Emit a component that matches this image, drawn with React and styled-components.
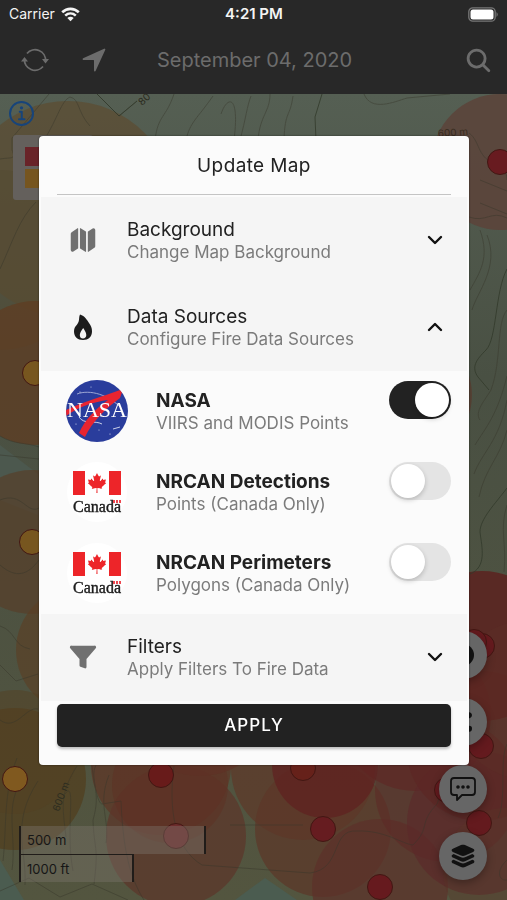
import React, { useState } from "react";
import styled, { createGlobalStyle } from "styled-components";
import {
  IoMap,
  IoFunnel,
  IoNavigate,
  IoSearch,
  IoInformationCircleOutline,
  IoLayers,
  IoShareSocial,
} from "react-icons/io5";
import { FaCanadianMapleLeaf } from "react-icons/fa";

const GlobalStyle = createGlobalStyle`
  * {
    box-sizing: border-box;
  }
  body {
    margin: 0;
    font-family: Inter, "Liberation Sans", sans-serif;
    background: #282828;
  }
  button {
    font-family: inherit;
    border: 0;
    padding: 0;
    background: none;
    cursor: pointer;
  }
  h1, h2, h3, p {
    margin: 0;
    font-weight: 400;
  }
`;

const Page = styled.div`
  display: flex;
  flex-direction: column;
  min-height: 100vh;
`;

const Header = styled.header`
  background: #282828;
`;

const StatusBar = styled.div`
  display: grid;
  grid-template-columns: 1fr auto 1fr;
  align-items: center;
  height: 28px;
  padding: 0 8px 0 9px;
  color: #f4f4f4;
  font-size: 14px;
  line-height: 20px;
`;

const Carrier = styled.div`
  display: flex;
  align-items: center;
  gap: 6px;
`;

const Clock = styled.div`
  font-size: 15px;
  font-weight: 600;
`;

const Battery = styled.svg`
  justify-self: end;
`;

const Toolbar = styled.div`
  display: grid;
  grid-template-columns: 1fr auto 1fr;
  align-items: center;
  height: 66px;
  padding: 0 14px 2px 16px;
  color: #6c6c6c;
`;

const ToolGroup = styled.div`
  display: flex;
  gap: 20px;
  justify-content: ${(props) => (props.$end ? "flex-end" : "flex-start")};
`;

const ToolButton = styled.button`
  display: flex;
  align-items: center;
  justify-content: center;
  min-width: 30px;
  height: 44px;
  padding: 0 ${(props) => props.$pad || 0}px;
  color: inherit;
`;

const Title = styled.h1`
  text-align: center;
  font-size: 20px;
  line-height: 28px;
`;

const MapArea = styled.main`
  position: relative;
  flex: 1;
  overflow: hidden;
  background: #555b4d;
`;

const MapCanvas = styled.svg`
  position: absolute;
  inset: 0;
  width: 100%;
  height: 100%;
`;

const InfoButton = styled.button`
  position: absolute;
  top: 4px;
  left: 6px;
  display: flex;
  color: #17447a;
`;

const Legend = styled.div`
  position: absolute;
  top: 41px;
  left: 13px;
  display: grid;
  gap: 3px;
  width: 80px;
  padding: 12px;
  border-radius: 3px;
  background: #64605c;
`;

const Swatch = styled.div`
  width: 20px;
  height: 19px;
  background: ${(props) => props.$color};
`;

const ScaleBox = styled.div`
  position: absolute;
  left: 19px;
  bottom: 18px;
  color: #161616;
  font-size: 13px;
`;

const Scale = styled.div`
  display: flex;
  align-items: center;
  width: ${(props) => props.$width}px;
  height: 28px;
  padding-left: 6px;
  border: solid #201c19;
  border-width: ${(props) => (props.$last ? "1px 2px 0" : "0 2px")};
  background: rgba(125, 117, 110, 0.4);
`;

const MapButtons = styled.div`
  position: absolute;
  right: 20px;
  bottom: 20px;
  display: grid;
  gap: 19px;
`;

const RoundButton = styled.button`
  display: flex;
  align-items: center;
  justify-content: center;
  width: 48px;
  height: 48px;
  border-radius: 50%;
  color: #111;
  background: #666;
  box-shadow: 0 3px 8px rgba(0, 0, 0, 0.3);
`;

const Overlay = styled.div`
  position: fixed;
  inset: 0;
  display: flex;
  align-items: center;
  justify-content: center;
  padding: 0 38px 0 39px;
`;

const Dialog = styled.section`
  width: 100%;
  max-width: 520px;
  border-radius: 4px;
  color: #222;
  background: #fbfbfb;
  box-shadow: 0 0 2px rgba(0, 0, 0, 0.6);
`;

const DialogHeader = styled.div`
  padding: 0 18px 2px;

  h2 {
    height: 59px;
    padding-top: 2px;
    border-bottom: 1px solid #c4c4c4;
    text-align: center;
    font-size: 19px;
    letter-spacing: 0.02em;
    line-height: 56px;
  }
`;

const SectionWrap = styled.div`
  padding: 0 2px;
`;

const SectionButton = styled.button`
  display: flex;
  align-items: center;
  width: 100%;
  height: 87px;
  padding: 0 23px 0 26px;
  text-align: left;
  color: #222;
  background: #f5f5f5;
`;

const SectionIcon = styled.span`
  display: flex;
  justify-content: center;
  width: 32px;
  margin-right: 28px;
  color: ${(props) => (props.$active ? "#1c1c1c" : "#707070")};
`;

const Texts = styled.span`
  flex: 1;
  display: grid;
  gap: 1px;
`;

const Name = styled.span`
  color: #222;
  font-size: 19px;
  font-weight: ${(props) => (props.$bold ? 700 : 400)};
  line-height: 22px;
`;

const Note = styled.span`
  color: #7b7b7b;
  font-size: 17px;
  line-height: 20px;
`;

const SourceRow = styled.label`
  display: flex;
  align-items: center;
  height: 81px;
  padding: 0 18px 0 27px;
  cursor: pointer;
`;

const Logo = styled.svg`
  flex: none;
  margin-right: 28px;
`;

const Switch = styled.input`
  appearance: none;
  align-self: flex-start;
  flex: none;
  display: flex;
  width: 62px;
  height: 38px;
  margin: 10px 0 0;
  padding: 2px;
  border-radius: 19px;
  background: #e4e4e4;
  cursor: pointer;

  &::before {
    content: "";
    width: 34px;
    height: 34px;
    border-radius: 50%;
    background: #fff;
    box-shadow: 0 2px 5px rgba(0, 0, 0, 0.2);
  }

  &:checked {
    justify-content: flex-end;
    background: #222;
  }
`;

const DialogFooter = styled.div`
  padding: 3px 18px 18px;
`;

const ApplyButton = styled.button`
  width: 100%;
  height: 43px;
  border-radius: 5px;
  color: #fff;
  background: #222;
  font-size: 17px;
  font-weight: 500;
  letter-spacing: 0.06em;
  box-shadow: 0 2px 3px rgba(0, 0, 0, 0.25);
`;

const DOTS = [
  [35, 373, "#77561f"],
  [32, 542, "#77561f"],
  [15, 779, "#80591f"],
  [500, 162, "#681b20"],
  [161, 775, "#681b1a"],
  [303, 768, "#66211a"],
  [323, 829, "#661c20"],
  [176, 836, "#6d2c2c"],
  [380, 887, "#661a1e"],
  [479, 823, "#641a1e"],
  [481, 746, "#641a1e"],
  [482, 646, "#641a1e"],
  [474, 642, "#641a1e"],
  [447, 790, "#641a1e"],
];

const HALOS = [
  [68, 209, 108, "#5c4c30", 0.7],
  [0, 260, 90, "#544a32", 0.5],
  [35, 373, 72, "#5f3c22", 0.75],
  [32, 542, 72, "#573e29", 0.7],
  [80, 650, 64, "#5b3f25", 0.65],
  [15, 779, 71, "#514020", 0.8],
  [15, 752, 62, "#543f22", 0.5],
  [500, 162, 68, "#5c4339", 0.85],
  [161, 765, 70, "#5c3828", 0.8],
  [176, 836, 70, "#5d3529", 0.7],
  [170, 785, 58, "#5f2c20", 0.4],
  [303, 768, 72, "#5c3b2a", 0.8],
  [323, 829, 68, "#5d3628", 0.7],
  [200, 700, 76, "#5f3024", 0.6],
  [325, 765, 53, "#602020", 0.7],
  [380, 887, 68, "#5d3029", 0.7],
  [415, 715, 76, "#602422", 0.65],
  [447, 790, 72, "#5d2a26", 0.6],
  [479, 823, 72, "#5b282a", 0.6],
  [481, 746, 75, "#5c2423", 0.55],
  [482, 646, 75, "#5c1f1d", 0.8],
  [505, 870, 62, "#5a3528", 0.4],
  [530, 700, 80, "#5b2e26", 0.5],
  [410, 395, 62, "#5b3529", 0.6],
];

const CONTOURS = [
  "M49 94L12 138V150C16 160 12 157 0 159",
  "M44 140C58 118 61 101 70 97C80 99 77 112 90 126",
  "M97 94L119 116L137 101",
  "M174 94C166 118 158 115 155 140M213 96C197 119 190 122 186 140M221 114C227 96 240 93 234 140M240 140C246 118 247 106 251 96",
  "M270 94C270 112 260 115 258 140M293 96C290 118 285 110 284 140",
  "M364 94C371 112 394 102 407 98L450 94",
  "M469 133C480 141 477 156 493 163C500 170 507 168 507 180",
  "M480 180L507 191M480 203L507 214M469 217C486 223 491 210 507 218",
  "M480 230C490 258 480 272 470 290M487 235C500 267 477 292 472 310",
  "M507 310C496 323 502 360 491 390C485 400 474 412 480 420",
  "M507 376C497 416 486 427 475 445M507 400C499 442 482 452 474 474M507 430C500 458 485 468 479 497",
  "M507 505C499 530 507 543 504 572",
  "M0 269C13 241 19 219 36 202",
  "M0 436C15 445 25 442 39 447M0 455L39 459M0 500C22 491 27 515 39 508",
  "M0 565C16 579 28 575 39 560",
  "M0 626C16 631 13 646 30 649M0 665L16 681L38 674",
  "M0 720C16 732 26 706 38 709",
  "M3 861C7 825 3 793 17 758M12 870C17 837 3 802 24 779M25 885C27 850 10 824 38 781",
  "M65 794C77 778 65 830 73 871M77 766C60 793 62 804 66 837",
  "M96 765C89 780 102 790 93 820C94 850 99 845 94 884M109 775C97 805 110 819 106 843",
  "M92 766C94 785 98 804 102 804L121 801C123 850 130 878 144 900",
  "M174 766C168 810 175 849 202 865L310 873C343 869 330 829 357 831C385 830 402 844 413 845C431 827 418 824 437 804C445 781 455 762 469 750",
  "M230 825L303 825",
  "M0 891L29 878L60 897L92 884L128 900",
  "M507 744C499 760 507 800 498 818M507 860C496 870 498 881 507 880",
];

function FireMap() {
  return (
    <MapCanvas viewBox="0 94 507 806" preserveAspectRatio="xMidYMid slice" aria-hidden="true">
      <defs>
        <linearGradient id="land" x1="0" y1="0" x2="0" y2="1">
          <stop offset="0" stopColor="#555f53" />
          <stop offset=".35" stopColor="#495043" />
          <stop offset="1" stopColor="#53553f" />
        </linearGradient>
      </defs>
      <rect y="94" width="507" height="806" fill="url(#land)" />
      <path d="M0 445L38 474V515L0 500Z" fill="#4c584e" />
      <path d="M0 860L24 900H0ZM235 900L265 878L297 900H235Z" fill="#4b5c50" />
      {HALOS.map(([x, y, r, color, opacity], i) => (
        <circle key={i} cx={x} cy={y} r={r} fill={color} opacity={opacity} />
      ))}
      <g fill="none" stroke="#37362a" strokeWidth="1" opacity=".45">
        {CONTOURS.map((d) => (
          <path key={d} d={d} />
        ))}
      </g>
      <path
        d="M322 94L315 117L316 140M97 94L119 116L137 101M507 269C495 291 497 339 486 350C476 360 471 367 478 377L489 390M507 488C495 504 480 519 480 532C482 548 487 567 470 574"
        fill="none"
        stroke="#323a2a"
        opacity=".8"
      />
      <g fill="#2c2c20" fontSize="10">
        <text transform="translate(142 106) rotate(-42)">80</text>
        <text transform="translate(438 137) rotate(-4)" fill="#382c20">
          600 m
        </text>
        <text transform="translate(59 812) rotate(-70)">600 m</text>
      </g>
      {DOTS.map(([x, y, color]) => (
        <circle key={`${x}-${y}`} cx={x} cy={y} r="12.5" fill={color} stroke="#421713" />
      ))}
    </MapCanvas>
  );
}

function NasaLogo() {
  return (
    <Logo width="62" height="62" viewBox="0 0 62 62" role="img" aria-label="NASA">
      <clipPath id="globe">
        <circle cx="31" cy="31" r="31" />
      </clipPath>
      <g clipPath="url(#globe)">
        <rect width="62" height="62" fill="#2a3d9c" />
        <path d="M11 14C24 9 43 15 55 28" fill="none" stroke="#a9b2da" strokeWidth=".9" />
        <path d="M13 37C18 45 29 40 36 44M47 49L54 47" fill="none" stroke="#dbe0f1" strokeWidth=".9" />
        <path d="M0 30C16 22 36 17 57 9L54 18C40 28 26 42 19 57L13 53C19 40 28 30 42 20C28 22 14 26 0 36Z" fill="#e82430" />
      </g>
      <g fill="#dce2f4">
        <circle cx="14" cy="12" r=".6" />
        <circle cx="25" cy="7" r=".5" />
        <circle cx="10" cy="44" r=".6" />
        <circle cx="44" cy="54" r=".6" />
        <circle cx="33" cy="50" r=".5" />
      </g>
      <text x="31" y="37" textAnchor="middle" fill="#fff" fontFamily="Liberation Serif, serif" fontSize="22">
        NASA
      </text>
    </Logo>
  );
}

function CanadaLogo() {
  return (
    <Logo width="62" height="62" viewBox="0 0 62 62" role="img" aria-label="Canada">
      <circle cx="31" cy="31" r="30" fill="#fff" />
      <path d="M7 10H19V34H7ZM43 10H55V34H43Z" fill="#ed2529" />
      <FaCanadianMapleLeaf x="21" y="12" size={20} color="#ed2529" />
      <text x="7" y="51" fontFamily="Liberation Serif, serif" fontSize="16" fill="#1d1d1d" stroke="#1d1d1d" strokeWidth=".4">
        Canada
      </text>
      <path d="M47 39H49V42H47ZM53 39H55V42H53ZM50 39H52V42H50Z" fill="#ed4850" />
    </Logo>
  );
}

function FlameIcon() {
  return (
    <svg width="20" height="27" viewBox="0 0 20 27" aria-hidden="true">
      <path
        fill="currentColor"
        fillRule="evenodd"
        d="M7 .5c5 1.500 7 5.500 9 8.500 2 3 3 5 3 8.500C19 22.500 15.500 26 10 26S1 22.500 1 17.500C1 12 5 11 5.800 7c.5-2.500.2-4.500 1.200-6.500ZM10.200 14c-1.200 2-3.400 4.500-3.400 7s1.300 3.500 3.200 3.500 3.300-1.300 3.300-3.500c0-3-2-5-3.100-7Z"
      />
    </svg>
  );
}

function Chevron({ open }) {
  return (
    <svg width="18" height="12" viewBox="0 0 18 12" fill="none" stroke="#111" strokeWidth="2.4" aria-hidden="true">
      <path d={open ? "M3 9L9 3L15 9" : "M3 3L9 9L15 3"} strokeLinecap="round" strokeLinejoin="round" />
    </svg>
  );
}

function Section({ icon, name, note, open, onToggle }) {
  return (
    <SectionWrap>
      <SectionButton type="button" aria-expanded={open} onClick={onToggle}>
        <SectionIcon $active={open}>{icon}</SectionIcon>
        <Texts>
          <Name>{name}</Name>
          <Note>{note}</Note>
        </Texts>
        <Chevron open={open} />
      </SectionButton>
    </SectionWrap>
  );
}

const SOURCES = [
  { id: "nasa", name: "NASA", note: "VIIRS and MODIS Points", logo: <NasaLogo /> },
  { id: "detections", name: "NRCAN Detections", note: "Points (Canada Only)", logo: <CanadaLogo /> },
  { id: "perimeters", name: "NRCAN Perimeters", note: "Polygons (Canada Only)", logo: <CanadaLogo /> },
];

function UpdateMap() {
  const [open, setOpen] = useState("sources");
  const [enabled, setEnabled] = useState({ nasa: true, detections: false, perimeters: false });

  const toggleSection = (id) => setOpen(open === id ? "" : id);
  const toggleSource = (id) => setEnabled({ ...enabled, [id]: !enabled[id] });

  return (
    <Dialog role="dialog" aria-labelledby="dialog-title">
      <DialogHeader>
        <h2 id="dialog-title">Update Map</h2>
      </DialogHeader>
      <Section
        icon={<IoMap size={28} />}
        name="Background"
        note="Change Map Background"
        open={open === "background"}
        onToggle={() => toggleSection("background")}
      />
      <Section
        icon={<FlameIcon />}
        name="Data Sources"
        note="Configure Fire Data Sources"
        open={open === "sources"}
        onToggle={() => toggleSection("sources")}
      />
      {open === "sources" &&
        SOURCES.map(({ id, name, note, logo }) => (
          <SourceRow key={id}>
            {logo}
            <Texts>
              <Name $bold>{name}</Name>
              <Note>{note}</Note>
            </Texts>
            <Switch type="checkbox" checked={enabled[id]} onChange={() => toggleSource(id)} />
          </SourceRow>
        ))}
      <Section
        icon={<IoFunnel size={28} />}
        name="Filters"
        note="Apply Filters To Fire Data"
        open={open === "filters"}
        onToggle={() => toggleSection("filters")}
      />
      <DialogFooter>
        <ApplyButton type="button">APPLY</ApplyButton>
      </DialogFooter>
    </Dialog>
  );
}

function App() {
  return (
    <Page>
      <GlobalStyle />
      <Header>
        <StatusBar>
          <Carrier>
            Carrier
            <svg width="19" height="15" viewBox="0 0 19 15" fill="none" stroke="currentColor" strokeWidth="2.600" aria-hidden="true">
              <path d="M1.200 5.300C6 .7 13 .7 17.800 5.300M4.200 8.600C7.300 5.800 11.700 5.800 14.800 8.600" />
              <path d="M6.300 11C8.300 9.300 10.700 9.300 12.700 11L9.500 14.200Z" fill="currentColor" stroke="none" />
            </svg>
          </Carrier>
          <Clock>4:21 PM</Clock>
          <Battery width="31" height="15" viewBox="0 0 31 15" aria-label="Battery full">
            <rect x=".8" y=".8" width="26.400" height="13.400" rx="4" fill="none" stroke="#777" strokeWidth="1.300" />
            <rect x="2.500" y="2.500" width="23" height="10" rx="2.500" fill="#fff" />
            <path d="M28.500 5Q31 7.500 28.500 10Z" fill="#777" />
          </Battery>
        </StatusBar>
        <Toolbar>
          <ToolGroup>
            <ToolButton type="button" aria-label="Refresh" $pad={5}>
              <svg width="28" height="26" viewBox="0 0 28 26" fill="none" stroke="currentColor" strokeWidth="1.800">
                <path d="M6 6.500A10.500 10.500 0 0 1 24.500 14M22 19.500A10.500 10.500 0 0 1 3.500 12" />
                <path d="M0 14.500L3.500 10L7 14.500ZM21 12L24.500 16.500L28 12Z" fill="currentColor" stroke="none" />
              </svg>
            </ToolButton>
            <ToolButton type="button" aria-label="My location" $pad={6}>
              <IoNavigate size={28} />
            </ToolButton>
          </ToolGroup>
          <Title>September 04, 2020</Title>
          <ToolGroup $end>
            <ToolButton type="button" aria-label="Search">
              <IoSearch size={29} />
            </ToolButton>
          </ToolGroup>
        </Toolbar>
      </Header>
      <MapArea>
        <FireMap />
        <InfoButton type="button" aria-label="Map information">
          <IoInformationCircleOutline size={32} />
        </InfoButton>
        <Legend>
          <Swatch $color="#692328" />
          <Swatch $color="#76551f" />
        </Legend>
        <ScaleBox>
          <Scale $width={187}>500 m</Scale>
          <Scale $width={115} $last>
            1000 ft
          </Scale>
        </ScaleBox>
        <MapButtons>
          <RoundButton type="button" aria-label="Contrast">
            <svg width="24" height="24" viewBox="0 0 24 24">
              <circle cx="12" cy="12" r="11" fill="currentColor" />
            </svg>
          </RoundButton>
          <RoundButton type="button" aria-label="Share">
            <IoShareSocial size={24} />
          </RoundButton>
          <RoundButton type="button" aria-label="Comments">
            <svg width="26" height="26" viewBox="0 0 26 26" fill="none" stroke="currentColor" strokeWidth="1.800">
              <path d="M4 2H22Q25 2 25 5V16Q25 19 22 19H12L7 24V19H4Q1 19 1 16V5Q1 2 4 2Z" strokeLinejoin="round" />
              <path d="M8 11H8.010M13 11H13.010M18 11H18.010" strokeWidth="3.600" strokeLinecap="round" />
            </svg>
          </RoundButton>
          <RoundButton type="button" aria-label="Layers">
            <IoLayers size={28} />
          </RoundButton>
        </MapButtons>
      </MapArea>
      <Overlay>
        <UpdateMap />
      </Overlay>
    </Page>
  );
}

export default App;
